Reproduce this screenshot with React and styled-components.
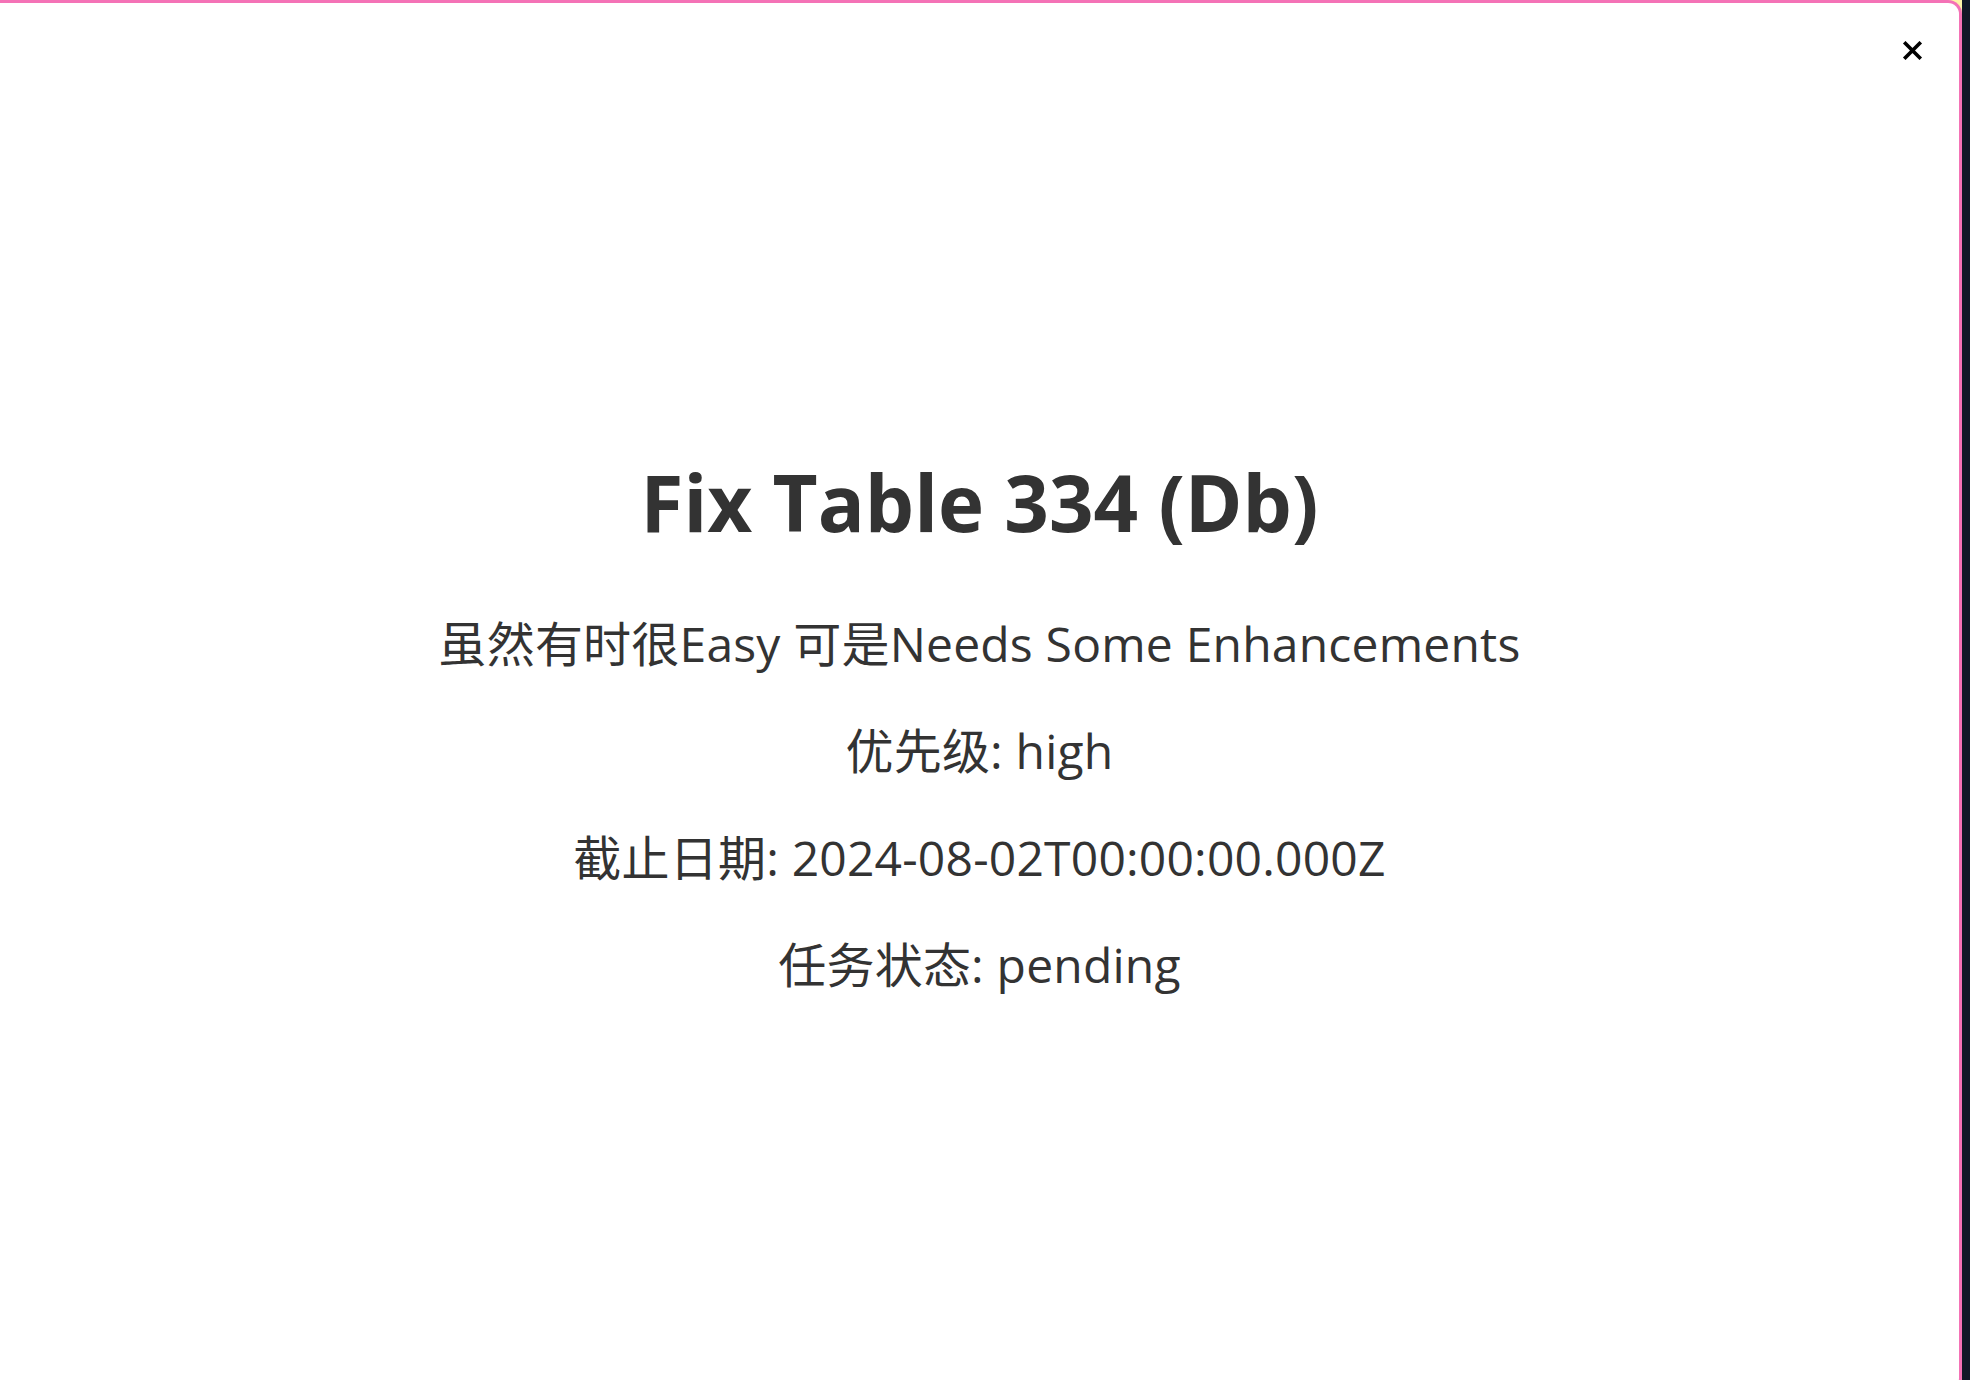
import React from 'react';
import styled, {createGlobalStyle} from 'styled-components';

const GlobalStyle = createGlobalStyle`
  html, body {
    margin: 0;
    padding: 0;
    height: 100%;
    overflow: hidden;
  }

  body {
    background-color: #fdf4a8;
    font-family: "Open Sans", "Noto Sans CJK SC", sans-serif;
  }
`

const Page = styled.div`
  display: flex;
  height: 100vh;
  overflow: hidden;
`

const Modal = styled.div`
  flex: 1;
  height: 1386px;
  display: flex;
  flex-direction: column;
  background-color: #ffffff;
  border: 3px solid #f472b6;
  border-left: none;
  border-radius: 0 14px 14px 0;
`

const Scrollbar = styled.div`
  width: 8px;
  background-color: #111827;
`

const Header = styled.div`
  display: flex;
  justify-content: flex-end;
  padding: 38px 36px 0 0;
`

const CloseButton = styled.button`
  display: flex;
  padding: 0;
  border: none;
  background: none;
  cursor: pointer;
  color: #000000;
`

const Body = styled.div`
  display: flex;
  flex-direction: column;
  align-items: center;
  padding-top: 394px;
  color: #333333;
`

const Title = styled.h1`
  margin: 0 0 64px;
  font-size: 78px;
  font-weight: 700;
  line-height: 96px;
`

const Line = styled.p`
  margin: 0 0 47px;
  font-size: 48px;
  font-weight: 400;
  line-height: 60px;
  letter-spacing: 0.2px;
`

const task = {
    title: 'Fix Table 334 (Db)',
    description: '虽然有时很Easy 可是Needs Some Enhancements',
    priority: 'high',
    dueDate: '2024-08-02T00:00:00.000Z',
    status: 'pending',
};

const App = () => {
    return (
        <Page>
            <GlobalStyle/>
            <Modal>
                <Header>
                    <CloseButton type={'button'} aria-label={'close'}>
                        <svg width="21" height="19" viewBox="0 0 21 19">
                            <path d="M3.5 2.5 L17.5 16.5 M17.5 2.5 L3.5 16.5" stroke="currentColor"
                                  strokeWidth="3.6" strokeLinecap="square"/>
                        </svg>
                    </CloseButton>
                </Header>
                <Body>
                    <Title>{task.title}</Title>
                    <Line>{task.description}</Line>
                    <Line>优先级: {task.priority}</Line>
                    <Line>截止日期: {task.dueDate}</Line>
                    <Line>任务状态: {task.status}</Line>
                </Body>
            </Modal>
            <Scrollbar/>
        </Page>
    )
};

export default App;
